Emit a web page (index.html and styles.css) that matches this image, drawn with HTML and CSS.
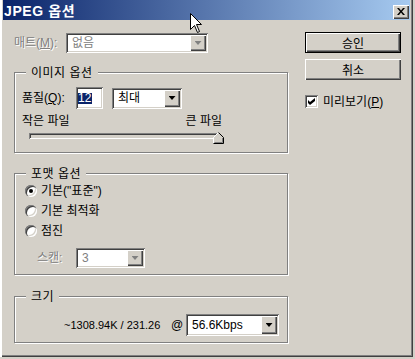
FILE: index.html
```html
<!DOCTYPE html>
<html lang="ko">
<head>
    <meta charset="UTF-8">
    <title>JPEG 옵션</title>
    <link rel="stylesheet" href="styles.css">
</head>
<body>
    <div class="window">
        <div class="titlebar">
            <span class="title">JPEG 옵션</span>
            <button class="close-btn">
                <svg width="8" height="7" viewBox="0 0 8 7"><path d="M0 0h2l2 2.4L6 0h2L5 3.5 8 7H6L4 4.6 2 7H0l3-3.5z" fill="#000"/></svg>
            </button>
        </div>

        <div class="dialog">
            <div class="left-col">
                <div class="matte-row">
                    <span class="label disabled matte-label">매트(<u>M</u>):</span>
                    <div class="combo combo-matte disabled">
                        <span class="combo-text">없음</span>
                        <span class="drop-btn"></span>
                    </div>
                </div>

                <div class="group group-image">
                    <div class="group-title">이미지 옵션</div>
                    <div class="quality-row">
                        <span class="label quality-label">품질(<u>Q</u>):</span>
                        <div class="textbox"><span class="selected">12</span></div>
                        <div class="combo combo-quality">
                            <span class="combo-text">최대</span>
                            <span class="drop-btn"></span>
                        </div>
                    </div>
                    <div class="size-labels">
                        <span>작은 파일</span>
                        <span>큰 파일</span>
                    </div>
                    <div class="slider">
                        <div class="track"></div>
                        <svg class="thumb" width="11" height="12" viewBox="0 0 11 12">
                            <polygon points="0.5,5.5 5.5,0.5 10.5,5.5 10.5,11.5 0.5,11.5" fill="#D4D0C8"/>
                            <path d="M0.5 11V5.5L5.5 0.5" stroke="#fff" fill="none"/>
                            <path d="M5.5 0.5L10.5 5.5V11.5H0.5" stroke="#000" fill="none"/>
                            <path d="M9.5 6V10.5H1.5" stroke="#808080" fill="none"/>
                        </svg>
                    </div>
                </div>

                <div class="group group-format">
                    <div class="group-title">포맷 옵션</div>
                    <div class="radio-row">
                        <span class="radio checked"></span>
                        <span>기본("표준")</span>
                    </div>
                    <div class="radio-row">
                        <span class="radio"></span>
                        <span>기본 최적화</span>
                    </div>
                    <div class="radio-row">
                        <span class="radio"></span>
                        <span>점진</span>
                    </div>
                    <div class="scan-row">
                        <span class="label disabled scan-label">스캔:</span>
                        <div class="combo combo-scan disabled">
                            <span class="combo-text">3</span>
                            <span class="drop-btn"></span>
                        </div>
                    </div>
                </div>

                <div class="group group-size">
                    <div class="group-title">크기</div>
                    <div class="size-row">
                        <span class="size-text">~1308.94K / 231.26</span>
                        <span class="at-sign">@</span>
                        <div class="combo combo-speed">
                            <span class="combo-text">56.6Kbps</span>
                            <span class="drop-btn"></span>
                        </div>
                    </div>
                </div>
            </div>

            <div class="right-col">
                <button class="btn btn-default">승인</button>
                <button class="btn">취소</button>
                <div class="check-row">
                    <span class="checkbox">
                        <svg width="7" height="7" viewBox="0 0 7 7"><polygon points="0,2 2,4 7,0 7,3 2,7 0,5" fill="#000"/></svg>
                    </span>
                    <span>미리보기(<u>P</u>)</span>
                </div>
            </div>
        </div>

        <!-- mouse pointer -->
        <svg class="cursor" width="13" height="21" viewBox="0 0 13 21">
            <path d="M0.5 0.5V16.5L4.5 12.5L7.5 19.5L9.5 18.5L6.5 11.5H11.5Z" fill="#fff" stroke="#000"/>
        </svg>
    </div>
</body>
</html>
```

FILE: styles.css
```css
body {
    margin: 0;
    background-color: #D4D0C8;
    font-family: "Liberation Sans", "Noto Sans CJK KR", sans-serif;
    font-size: 12px;
    line-height: 14px;
    color: #000;
}
.window {
    position: relative;
    width: 413px;
    height: 357px;
    box-sizing: border-box;
    padding: 0 3px 3px 3px;
    background-color: #D4D0C8;
    box-shadow: inset 2px 0 #fff, inset -1px -1px #404040, inset -2px -2px #808080;
}
.titlebar {
    height: 20px;
    box-sizing: border-box;
    padding: 2px 1px 0 1px;
    display: flex;
    align-items: center;
    justify-content: space-between;
    background: linear-gradient(to right, #0A246A, #A6CAF0);
}
.title {
    color: white;
    font-weight: bold;
    font-size: 14px;
    letter-spacing: 0.6px;
}
.close-btn {
    width: 16px;
    height: 14px;
    padding: 0;
    border: none;
    margin-top: 1px;
    background-color: #D4D0C8;
    box-shadow: inset 1px 1px #fff, inset -1px -1px #404040, inset -2px -2px #808080;
    display: flex;
    align-items: center;
    justify-content: center;
}

.dialog {
    display: flex;
    padding-left: 11px;
}
.left-col {
    width: 275px;
    display: flex;
    flex-direction: column;
}
.right-col {
    width: 96px;
    margin-left: 16px;
    padding-top: 12px;
    display: flex;
    flex-direction: column;
}

.label.disabled {
    color: #808080;
    text-shadow: 1px 1px 0 #fff;
}
.matte-row {
    display: flex;
    align-items: center;
    height: 20px;
    margin-top: 13px;
}
.matte-label {
    width: 52px;
}

/* combo boxes */
.combo {
    display: flex;
    box-sizing: border-box;
    padding: 2px;
    background-color: #fff;
    box-shadow: inset 1px 1px #808080, inset -1px -1px #fff, inset 2px 2px #404040, inset -2px -2px #D4D0C8;
}
.combo-text {
    flex: 1;
    display: flex;
    align-items: center;
    padding-left: 4px;
}
.combo.disabled .combo-text {
    color: #808080;
}
.drop-btn {
    width: 16px;
    display: flex;
    align-items: center;
    justify-content: center;
    background-color: #D4D0C8;
    box-shadow: inset 1px 1px #fff, inset -1px -1px #404040, inset -2px -2px #808080;
}
.drop-btn::after {
    content: "";
    width: 7px;
    height: 4px;
    background-color: #000;
    clip-path: polygon(0 0, 100% 0, 50% 100%);
}
.combo.disabled .drop-btn::after {
    background-color: #808080;
}
.combo-matte {
    width: 142px;
    height: 20px;
}
.combo-quality {
    width: 70px;
    height: 21px;
    margin-left: 9px;
}
.combo-scan {
    width: 69px;
    height: 20px;
}
.combo-speed {
    width: 93px;
    height: 22px;
}

/* group boxes */
.group {
    position: relative;
    box-sizing: border-box;
    width: 274px;
    border: 1px solid #808080;
    box-shadow: inset 1px 1px #fff, 1px 1px #fff;
}
.group-title {
    position: absolute;
    top: -7px;
    left: 11px;
    padding: 0 5px;
    background-color: #D4D0C8;
    line-height: 14px;
    letter-spacing: 0.5px;
}
.group-image {
    height: 81px;
    margin-top: 19px;
    padding: 14px 0 0 7px;
}
.group-format {
    height: 102px;
    margin-top: 20px;
    padding: 7px 0 0 10px;
}
.group-size {
    height: 47px;
    margin-top: 21px;
    padding: 17px 0 0 49px;
}

.quality-row {
    display: flex;
    align-items: center;
    height: 22px;
}
.quality-label {
    width: 54px;
}
.textbox {
    width: 27px;
    height: 22px;
    box-sizing: border-box;
    padding: 4px 0 0 2px;
    background-color: #fff;
    box-shadow: inset 1px 1px #808080, inset -1px -1px #fff, inset 2px 2px #404040, inset -2px -2px #D4D0C8;
}
.selected {
    display: inline-block;
    background-color: #0A246A;
    color: white;
    line-height: 11px;
    padding: 0 1px 0 0;
}
.size-labels {
    display: flex;
    justify-content: space-between;
    width: 200px;
    margin-top: 6px;
    line-height: 13px;
}
.slider {
    position: relative;
    width: 190px;
    height: 6px;
    margin: 5px 0 0 7px;
}
.track {
    height: 6px;
    background-color: #D4D0C8;
    box-shadow: inset 1px 1px #808080, inset -1px -1px #fff, inset 2px 2px #404040, inset -2px -2px #D4D0C8;
}
.thumb {
    position: absolute;
    left: 184px;
    top: -1px;
}

.radio-row {
    display: flex;
    align-items: center;
    height: 20px;
}
.radio {
    position: relative;
    width: 12px;
    height: 12px;
    margin-right: 4px;
    border-radius: 50%;
    background-color: #fff;
    box-shadow: inset 1px 1px #808080, inset 2px 2px #404040, inset -1px -1px #fff, inset -2px -2px #D4D0C8;
}
.radio.checked::after {
    content: "";
    position: absolute;
    left: 4px;
    top: 4px;
    width: 4px;
    height: 4px;
    border-radius: 50%;
    background-color: #000;
}
.scan-row {
    display: flex;
    align-items: center;
    height: 20px;
    margin-top: 7px;
    padding-left: 12px;
}
.scan-label {
    width: 39px;
}

.size-row {
    display: flex;
    align-items: center;
    height: 22px;
}
.size-text {
    width: 107px;
    font-size: 11px;
    white-space: nowrap;
}
.at-sign {
    width: 15px;
}

/* buttons */
.btn {
    width: 96px;
    height: 21px;
    padding: 0;
    border: none;
    font-family: inherit;
    font-size: 12px;
    color: #000;
    background-color: #D4D0C8;
    box-shadow: inset 1px 1px #fff, inset -1px -1px #404040, inset -2px -2px #808080;
}
.btn + .btn {
    margin-top: 6px;
}
.btn-default {
    border: 1px solid #000;
}
.check-row {
    display: flex;
    align-items: center;
    height: 13px;
    margin-top: 15px;
}
.checkbox {
    width: 13px;
    height: 13px;
    margin-right: 5px;
    display: flex;
    align-items: center;
    justify-content: center;
    background-color: #fff;
    box-shadow: inset 1px 1px #808080, inset -1px -1px #fff, inset 2px 2px #404040, inset -2px -2px #D4D0C8;
}

.cursor {
    position: absolute;
    left: 190px;
    top: 13px;
}
```
